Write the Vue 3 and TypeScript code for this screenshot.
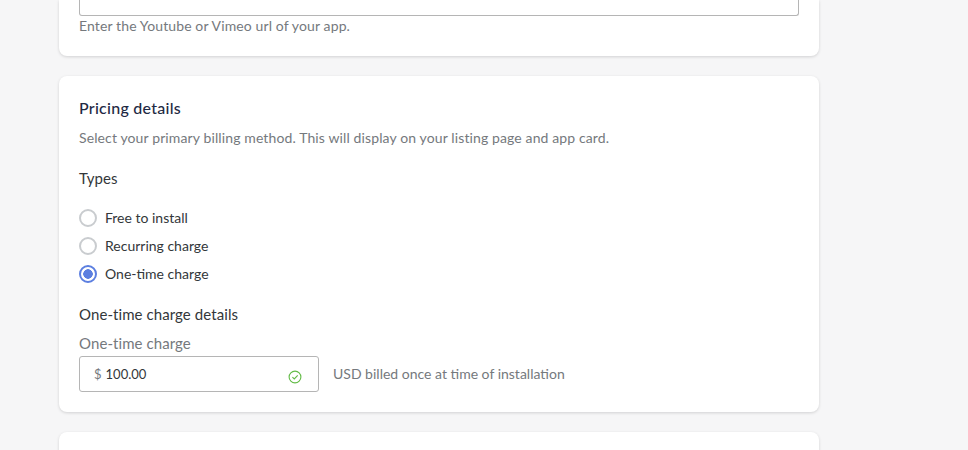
<script setup lang="ts">
import { ref } from 'vue';

const types = ['Free to install', 'Recurring charge', 'One-time charge'];
const selected = ref('One-time charge');
const price = ref('100.00');
</script>

<template>
  <div class="page">
    <section class="card card-video">
      <div class="video-input"></div>
      <p class="help wide">Enter the Youtube or Vimeo url of your app.</p>
    </section>

    <section class="card card-pricing">
      <h2>Pricing details</h2>
      <p class="help wide intro">Select your primary billing method. This will display on your listing page and app card.</p>
      <h3 class="types">Types</h3>
      <div class="radios">
        <label v-for="t in types" :key="t" class="radio">
          <span class="dot" :class="{ on: selected === t }"></span>
          <span>{{ t }}</span>
        </label>
      </div>
      <h3 class="details">One-time charge details</h3>
      <div class="field-label">One-time charge</div>
      <div class="field-row">
        <div class="field">
          <span class="prefix">$</span>
          <span class="value">{{ price }}</span>
          <svg class="check" width="14" height="14" viewBox="0 0 14 14" fill="none">
            <circle cx="7" cy="7" r="5.9" stroke="#62bb46" stroke-width="1.1" />
            <path d="M4.4 7.1 6.3 9 9.7 5.4" stroke="#62bb46" stroke-width="1.1" />
          </svg>
        </div>
        <span class="help">USD billed once at time of installation</span>
      </div>
    </section>

    <section class="card card-next"></section>
  </div>
</template>

<style>
body {
  background: #f6f6f7;
}
</style>

<style scoped>
.page {
  width: 968px;
  height: 450px;
  overflow: hidden;
  box-sizing: border-box;
  padding-left: 59px;
  background: #f6f6f7;
  font-family: "Lato", "Open Sans", sans-serif;
  font-size: 14px;
  color: #212b36;
  display: flex;
  flex-direction: column;
  gap: 20px;
}

.card {
  width: 760px;
  box-sizing: border-box;
  flex: none;
  background: #fff;
  border-radius: 8px;
  box-shadow: 0 1px 3px rgba(63, 63, 68, 0.2);
  padding: 0 20px;
}

.card-video {
  height: 56px;
  border-radius: 0 0 8px 8px;
  display: flex;
  flex-direction: column;
  justify-content: flex-end;
  padding-bottom: 20px;
}

.video-input {
  height: 15px;
  flex: none;
  border: 1px solid #b5b5b5;
  border-top: 0;
  border-radius: 0 0 3px 3px;
}

.help {
  margin: 0;
  color: #75797d;
  line-height: 20px;
}

.wide {
  letter-spacing: 0.12px;
}

.card-pricing {
  height: 336px;
  padding-top: 22px;
}

.card-next {
  height: 40px;
  border-radius: 8px 8px 0 0;
}

h2 {
  margin: 0;
  font-size: 16px;
  font-weight: 500;
  letter-spacing: 0.27px;
  line-height: 20px;
  color: #1f2a44;
}

.intro {
  margin-top: 10px;
}

h3 {
  margin: 0;
  font-size: 15px;
  font-weight: 400;
  letter-spacing: 0.08px;
  line-height: 20px;
  color: #33373a;
}

.types {
  margin-top: 20px;
}

.radios {
  margin-top: 19px;
  display: flex;
  flex-direction: column;
  gap: 8px;
}

.radio {
  display: flex;
  align-items: center;
  gap: 8px;
  height: 20px;
  color: #33373a;
}

.dot {
  width: 18px;
  height: 18px;
  margin-top: 2px;
  box-sizing: border-box;
  border: 2px solid #c9cccf;
  border-radius: 50%;
  background: #fff;
}

.dot.on {
  border-color: #5c7fe0;
  background: radial-gradient(circle, #5c7fe0 0 4.5px, #fff 5px);
}

.details {
  margin-top: 21px;
}

.field-label {
  margin-top: 9px;
  font-size: 15px;
  letter-spacing: 0.08px;
  line-height: 20px;
  color: #75797d;
}

.field-row {
  margin-top: 3px;
  display: flex;
  align-items: center;
  gap: 14px;
}

.field {
  width: 240px;
  height: 36px;
  box-sizing: border-box;
  border: 1px solid #b5b5b5;
  border-radius: 3px;
  display: flex;
  align-items: center;
  padding: 0 16px 0 14px;
  gap: 4px;
  font-size: 13px;
  color: #33373a;
}

.prefix {
  color: #75797d;
}

.value {
  flex: 1;
}

.check {
  margin-top: 6px;
}
</style>
